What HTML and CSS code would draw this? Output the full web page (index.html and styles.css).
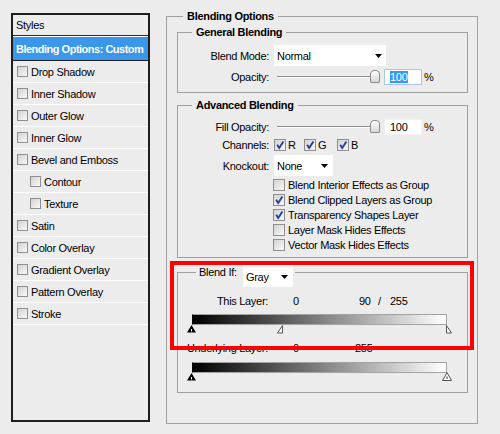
FILE: index.html
```html
<!DOCTYPE html>
<html>
<head>
<meta charset="utf-8">
<title>Layer Style</title>
<link rel="stylesheet" href="styles.css">
</head>
<body>
<div class="dialog">
  <div class="styles-panel">
    <div class="styles-head">Styles</div>
    <div class="style-item selected">Blending Options: Custom</div>
    <div class="style-item"><span class="cb"></span>Drop Shadow</div>
    <div class="style-item"><span class="cb"></span>Inner Shadow</div>
    <div class="style-item"><span class="cb"></span>Outer Glow</div>
    <div class="style-item"><span class="cb"></span>Inner Glow</div>
    <div class="style-item"><span class="cb"></span>Bevel and Emboss</div>
    <div class="style-item sub"><span class="cb"></span>Contour</div>
    <div class="style-item sub"><span class="cb"></span>Texture</div>
    <div class="style-item"><span class="cb"></span>Satin</div>
    <div class="style-item"><span class="cb"></span>Color Overlay</div>
    <div class="style-item"><span class="cb"></span>Gradient Overlay</div>
    <div class="style-item"><span class="cb"></span>Pattern Overlay</div>
    <div class="style-item"><span class="cb"></span>Stroke</div>
  </div>

  <fieldset class="group outer">
    <legend class="legend-outer">Blending Options</legend>

    <fieldset class="group general">
      <legend class="legend-inner">General Blending</legend>
      <div class="row row-select">
        <span class="label">Blend Mode:</span>
        <div class="select select-mode"><span>Normal</span><svg class="arrow" viewBox="0 0 7 4"><polygon points="0,0 7,0 3.5,4" /></svg></div>
      </div>
      <div class="row row-slider">
        <span class="label">Opacity:</span>
        <div class="slider"><div class="track"></div><div class="thumb"></div></div>
        <div class="num focused"><span class="sel">100</span></div>
        <span class="pct">%</span>
      </div>
    </fieldset>

    <fieldset class="group advanced">
      <legend class="legend-inner">Advanced Blending</legend>
      <div class="row row-slider">
        <span class="label">Fill Opacity:</span>
        <div class="slider"><div class="track"></div><div class="thumb"></div></div>
        <div class="num"><span>100</span></div>
        <span class="pct">%</span>
      </div>
      <div class="row row-channels">
        <span class="label">Channels:</span>
        <span class="ch ch-r"><span class="box checked"><svg viewBox="0 0 10 10"><path d="M2.2 4.8 L4.2 8 L8.4 1.4" /></svg></span>R</span>
        <span class="ch ch-g"><span class="box checked"><svg viewBox="0 0 10 10"><path d="M2.2 4.8 L4.2 8 L8.4 1.4" /></svg></span>G</span>
        <span class="ch"><span class="box checked"><svg viewBox="0 0 10 10"><path d="M2.2 4.8 L4.2 8 L8.4 1.4" /></svg></span>B</span>
      </div>
      <div class="row row-select">
        <span class="label">Knockout:</span>
        <div class="select select-knock"><span>None</span><svg class="arrow" viewBox="0 0 7 4"><polygon points="0,0 7,0 3.5,4" /></svg></div>
      </div>
      <div class="checks">
        <div class="check-row"><span class="box"></span>Blend Interior Effects as Group</div>
        <div class="check-row"><span class="box checked"><svg viewBox="0 0 10 10"><path d="M2.2 4.8 L4.2 8 L8.4 1.4" /></svg></span>Blend Clipped Layers as Group</div>
        <div class="check-row"><span class="box checked"><svg viewBox="0 0 10 10"><path d="M2.2 4.8 L4.2 8 L8.4 1.4" /></svg></span>Transparency Shapes Layer</div>
        <div class="check-row"><span class="box"></span>Layer Mask Hides Effects</div>
        <div class="check-row"><span class="box"></span>Vector Mask Hides Effects</div>
      </div>
    </fieldset>

    <fieldset class="group blendif">
      <legend class="legend-blendif"><span class="legend-flex"><span class="bi-text">Blend If:</span><span class="select select-gray"><span>Gray</span><svg class="arrow" viewBox="0 0 7 4"><polygon points="0,0 7,0 3.5,4" /></svg></span></span></legend>
      <div class="vals">
        <span class="vlabel">This Layer:</span>
        <span class="v-low this-low">0</span>
        <span class="v-mid">90</span>
        <span class="v-slash">/</span>
        <span>255</span>
      </div>
      <div class="gradient"></div>
      <div class="markers">
        <svg class="mk mk-black" viewBox="0 0 9 8"><polygon points="4.5,0 9,7.5 0,7.5" fill="#000"/><line x1="4.5" y1="4" x2="4.5" y2="6.5" stroke="#fff" stroke-width="1"/></svg>
        <svg class="mk mk-half-left" viewBox="0 0 6 9" style="left:85px"><polygon points="5.5,0.5 5.5,8 0.5,8" fill="#fff" stroke="#555" stroke-width="1"/></svg>
        <svg class="mk mk-half-right" viewBox="0 0 6 9" style="left:254px"><polygon points="0.5,0.5 0.5,8 5.5,8" fill="#fff" stroke="#555" stroke-width="1"/></svg>
      </div>
      <div class="vals vals-under">
        <span class="vlabel">Underlying Layer:</span>
        <span class="v-low under-low">0</span>
        <span>255</span>
      </div>
      <div class="gradient"></div>
      <div class="markers">
        <svg class="mk mk-black" viewBox="0 0 9 8"><polygon points="4.5,0 9,7.5 0,7.5" fill="#000"/><line x1="4.5" y1="4" x2="4.5" y2="6.5" stroke="#fff" stroke-width="1"/></svg>
        <svg class="mk mk-white" viewBox="0 0 10 9" style="left:250px"><polygon points="5,0.5 9.5,8.5 0.5,8.5" fill="#fff" stroke="#555" stroke-width="1"/><line x1="5" y1="4.5" x2="5" y2="7" stroke="#333" stroke-width="1"/></svg>
      </div>
    </fieldset>
  </fieldset>
</div>
<div class="highlight-box"></div>
</body>
</html>
```

FILE: styles.css
```css
* { box-sizing: border-box; }

html, body { margin: 0; padding: 0; }

body {
  width: 500px;
  height: 434px;
  background: #ececec;
  font-family: "Liberation Sans", Arial, sans-serif;
  font-size: 11px;
  letter-spacing: -0.3px;
  color: #000;
  position: relative;
  overflow: hidden;
}

.dialog {
  display: flex;
  align-items: flex-start;
  padding: 9px 0 0 11px;
}

/* ---------- Styles list ---------- */
.styles-panel {
  flex-shrink: 0;
  width: 139px;
  height: 409px;
  margin-top: 4px;
  border: 2px solid #1e1e1e;
  background: #ececec;
}

.styles-head {
  height: 21px;
  line-height: 20px;
  padding-left: 3px;
  border-bottom: 1px solid #2b2b2b;
}

.style-item {
  height: 22px;
  display: flex;
  align-items: center;
  padding-left: 4px;
  border-bottom: 1px solid #fff;
  white-space: nowrap;
}

.style-item.sub { padding-left: 17px; }

.style-item.selected {
  height: 25px;
  padding-left: 3px;
  border-top: 1px solid #fff;
  border-bottom: 1px solid #1e1e1e;
  background: #3a97ec;
  color: #fff;
  font-weight: bold;
  letter-spacing: -0.5px;
}

.cb {
  width: 11px;
  height: 11px;
  margin-right: 3px;
  border: 1px solid #8f8f8f;
  background: linear-gradient(135deg, #d2d2d2 0%, #ededed 70%, #fafafa 100%);
  flex-shrink: 0;
}

/* ---------- Fieldsets ---------- */
.group {
  margin: 0;
  min-width: 0;
  border: 1px solid #9f9f9f;
}

.group legend {
  height: 14px;
  line-height: 14px;
  padding: 0 4px;
  font-weight: bold;
}

.outer {
  margin-left: 16px;
  width: 312px;
  padding: 2px 9px 30px 10px;
}

.legend-outer { margin-left: 6px; }

.legend-inner { margin-left: 14px; }

.general {
  width: 291px;
  padding: 6px 0 7px 0;
}

.advanced {
  width: 291px;
  margin-top: 5px;
  padding: 7px 0 5px 0;
}

.blendif {
  width: 291px;
  margin-top: 7px;
  padding: 15px 0 11px 0;
}

.group .legend-blendif {
  margin-left: 18px;
  padding: 0 2px 0 3px;
  font-weight: normal;
}

.legend-flex {
  display: flex;
  align-items: flex-start;
  height: 14px;
}

.bi-text {
  width: 44px;
  line-height: 14px;
}

/* ---------- rows ---------- */
.row {
  display: flex;
  align-items: center;
}

.label {
  flex-shrink: 0;
  width: 91px;
  margin-right: 5px;
  text-align: right;
}

.row-select { height: 21px; }

.general .row-slider { margin-top: 3px; height: 16px; }

.advanced .row-slider { height: 16px; }

.row-channels { margin-top: 4px; height: 12px; }

.advanced .row-select { margin-top: 4px; }

.select {
  display: flex;
  align-items: center;
  justify-content: space-between;
  background: #fff;
  height: 21px;
  padding: 1px 5px 0 3px;
}

.select-mode { width: 112px; padding-right: 4px; }

.select-knock { width: 59px; }

.select-gray {
  width: 50px;
  height: 22px;
  flex-shrink: 0;
}

.arrow {
  width: 7px;
  height: 4px;
  fill: #000;
  flex-shrink: 0;
}

.slider {
  position: relative;
  width: 107px;
  height: 16px;
  padding-left: 3px;
  display: flex;
  align-items: center;
}

.track {
  flex: 1;
  height: 2px;
  border-top: 1px solid #8c8c8c;
  border-bottom: 1px solid #fdfdfd;
  margin-right: 3px;
}

.thumb {
  position: absolute;
  right: 1px;
  top: 1px;
  width: 10px;
  height: 13px;
  border: 1px solid #8a8a8a;
  border-radius: 4px 4px 1px 1px;
  background: linear-gradient(#ffffff, #d6d6d6);
}

.num {
  width: 38px;
  height: 16px;
  margin-left: 3px;
  padding-left: 5px;
  line-height: 14px;
  background: #fff;
  border: 1px solid #f2f2f2;
}

.num.focused { border-color: #a6c8ee; }

.sel {
  background: #3399ff;
  color: #fff;
  padding: 0 1px 0 0;
}

.pct { margin-left: 2px; }

.ch {
  display: flex;
  align-items: center;
}

.ch-r { width: 30px; }

.ch-g { width: 33px; }

.box {
  flex-shrink: 0;
  width: 12px;
  height: 12px;
  margin-right: 2px;
  border: 1px solid #8e8e8e;
  background: linear-gradient(135deg, #d3d3d3 0%, #ededed 70%, #fbfbfb 100%);
  display: flex;
}

.box svg {
  width: 10px;
  height: 10px;
}

.box path {
  fill: none;
  stroke: #22419c;
  stroke-width: 1.9;
}

.checks {
  margin-top: 1px;
  margin-left: 95px;
}

.check-row {
  height: 15px;
  display: flex;
  align-items: center;
}

.check-row .box { margin-right: 3px; }

/* ---------- Blend If ---------- */
.vals {
  display: flex;
  line-height: 14px;
  height: 14px;
}

.vals-under { margin-top: 8px; }

.vlabel {
  width: 90px;
  text-align: right;
  flex-shrink: 0;
}

.v-low { margin-left: 25px; }

.this-low { width: 66px; }

.under-low { width: 62px; }

.v-mid { width: 19px; }

.v-slash { width: 12px; }

.gradient {
  margin-top: 6px;
  margin-left: 14px;
  width: 255px;
  height: 11px;
  border: 1px solid #a2a2a2;
  border-left-color: #000;
  background: linear-gradient(to right, #000 0%, #fff 100%);
}

.vals-under + .gradient { margin-top: 7px; }

.markers {
  position: relative;
  margin-left: 14px;
  width: 255px;
  height: 8px;
}

.mk {
  position: absolute;
  top: 0;
}

.mk-black {
  left: -5px;
  width: 9px;
  height: 8px;
}

.mk-half-left, .mk-half-right {
  width: 6px;
  height: 9px;
}

.mk-white {
  top: -1px;
  width: 10px;
  height: 9px;
}

/* ---------- annotation ---------- */
.highlight-box {
  position: absolute;
  left: 170px;
  top: 261px;
  width: 304px;
  height: 89px;
  border: 4px solid #f00;
}
```
